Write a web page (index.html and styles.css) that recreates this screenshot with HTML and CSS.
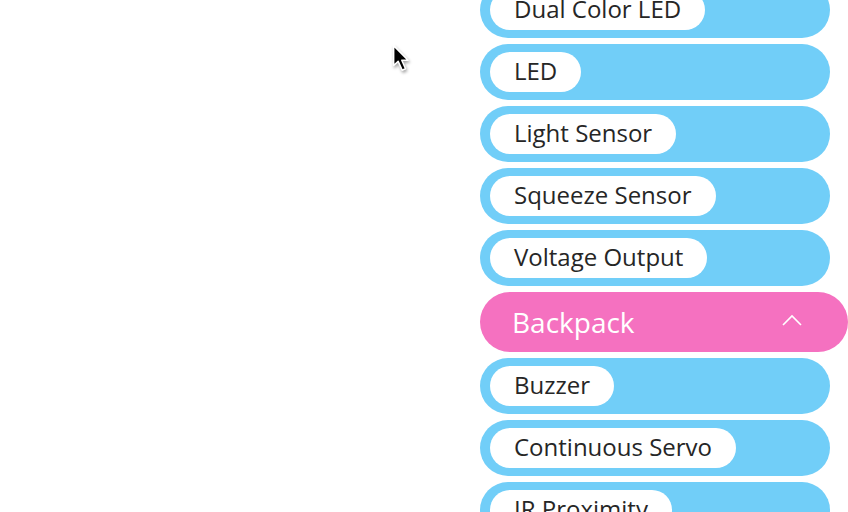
FILE: index.html
```html
<!DOCTYPE html>
<html>
<head>
<meta charset="utf-8">
<link rel="stylesheet" href="styles.css">
</head>
<body>
<div class="page">
  <div class="canvas"></div>
  <ul class="list">
    <li class="row"><span class="pill">Dual Color LED</span></li>
    <li class="row"><span class="pill">LED</span></li>
    <li class="row"><span class="pill">Light Sensor</span></li>
    <li class="row"><span class="pill">Squeeze Sensor</span></li>
    <li class="row"><span class="pill">Voltage Output</span></li>
    <li class="header"><span class="header-title">Backpack</span>
      <svg class="chevron" width="20" height="12" viewBox="0 0 20 12"><path d="M1 11 L10 2 L19 11" fill="none" stroke="#fff" stroke-width="1.6"/></svg>
    </li>
    <li class="row"><span class="pill">Buzzer</span></li>
    <li class="row"><span class="pill">Continuous Servo</span></li>
    <li class="row"><span class="pill">IR Proximity</span></li>
  </ul>
  <svg class="cursor" width="22" height="33" viewBox="0 0 20 30">
    <path d="M1.5 1.5 L1.5 19.5 L5.6 15.8 L9.2 23.8 L12.3 22.5 L8.9 14.8 L14.6 14.8 Z" fill="#000" stroke="#fff" stroke-width="1.4" stroke-linejoin="round"/>
  </svg>
</div>
</body>
</html>
```
FILE: styles.css
```css
html, body {
  margin: 0;
  padding: 0;
  background: #fff;
  overflow: hidden;
}
.page {
  position: relative;
  width: 848px;
  height: 512px;
  overflow: hidden;
  display: flex;
  align-items: flex-start;
  font-family: "Open Sans", "Noto Sans", sans-serif;
}
.canvas {
  width: 480px;
  flex: none;
}
.list {
  list-style: none;
  margin: -18px 0 0 0;
  padding: 0;
  display: flex;
  flex-direction: column;
  gap: 6px;
  width: 368px;
  flex: none;
}
.row {
  flex: none;
  width: 350px;
  height: 56px;
  box-sizing: border-box;
  background: #71cef8;
  border-radius: 28px;
  padding: 8px 10px;
  display: flex;
  align-items: center;
}
.pill {
  background: #fff;
  height: 40px;
  line-height: 38px;
  box-sizing: border-box;
  border-radius: 20px;
  padding: 0 24px;
  font-size: 24px;
  color: #262626;
  white-space: nowrap;
}
.header {
  flex: none;
  height: 60px;
  box-sizing: border-box;
  background: #f571c0;
  border-radius: 30px;
  padding: 0 46px 0 32px;
  display: flex;
  align-items: center;
  justify-content: space-between;
}
.header-title {
  color: #fff;
  font-size: 28px;
  line-height: 60px;
}
.chevron {
  display: block;
  margin-top: -4px;
}
.cursor {
  position: absolute;
  left: 392px;
  top: 44px;
  filter: drop-shadow(1px 2px 1.5px rgba(0,0,0,0.35));
}
```
